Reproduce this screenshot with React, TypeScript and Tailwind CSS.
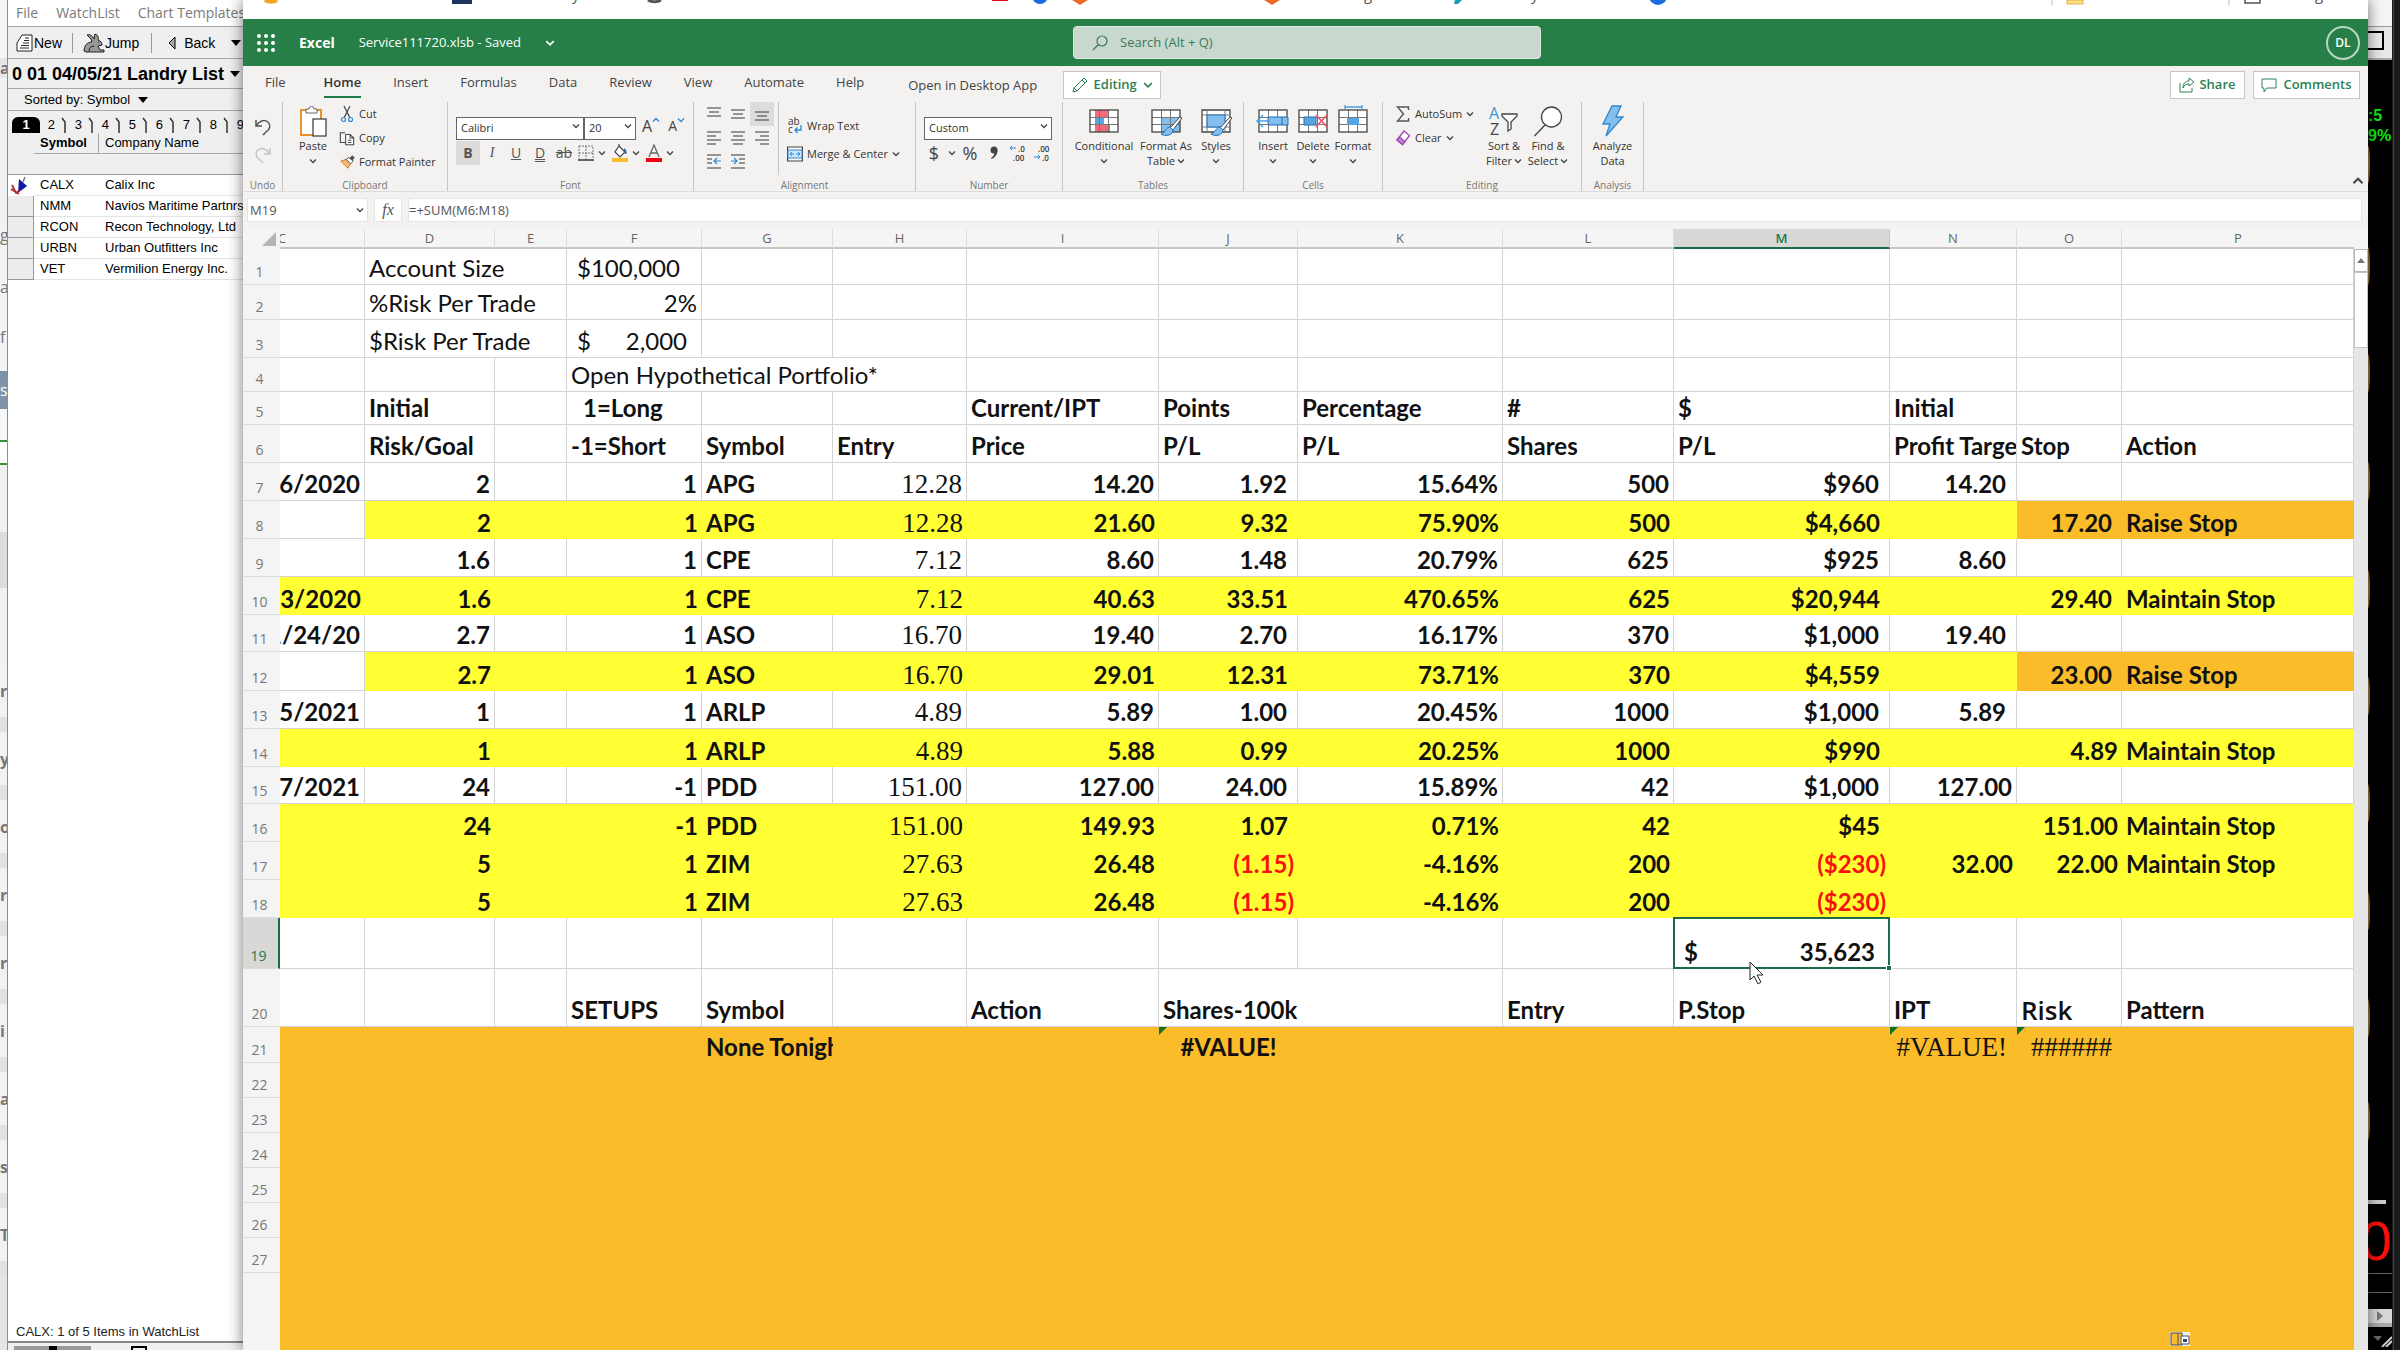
// App.tsx
// Desktop view: the watch list window on the left, the Excel workbook in front
// of it and the edge of the quotes board on the right.
import type { ReactNode } from 'react'

// ── Sheet data ────────────────────────────────────────
type CellValue = string | { v: string; cls: string }

interface SheetRow {
  n: number
  h: string
  fill?: string
  from?: string
  raise?: boolean
  cells?: Record<string, CellValue>
}

const COLS = [
  { id: 'C', w: 'w-[85px]' },
  { id: 'D', w: 'w-[130px]' },
  { id: 'E', w: 'w-[72px]' },
  { id: 'F', w: 'w-[135px]' },
  { id: 'G', w: 'w-[131px]' },
  { id: 'H', w: 'w-[134px]' },
  { id: 'I', w: 'w-[192px]' },
  { id: 'J', w: 'w-[139px]' },
  { id: 'K', w: 'w-[205px]' },
  { id: 'L', w: 'w-[171px]' },
  { id: 'M', w: 'w-[216px]' },
  { id: 'N', w: 'w-[127px]' },
  { id: 'O', w: 'w-[105px]' },
  { id: 'P', w: '' },
]

const YELLOW = 'bg-[#ffff33]'
const ORANGE = 'bg-[#fbbc2a]'

const left = (v: string) => ({ v, cls: 'justify-start pl-1' })
const tight = (v: string) => ({ v, cls: 'justify-end pr-1' })
const loss = (v: string) => ({ v, cls: 'justify-end pr-1 text-[#fb0f0c]' })
const light = (v: string) => ({ v, cls: 'justify-start pl-1 font-normal' })
const serif = (v: string) => ({ v, cls: "justify-end pr-2.5 font-normal text-[27px] font-['Liberation_Serif',serif]" })

// Default alignment for the number columns
const COL_CLS: Record<string, string> = {
  C: 'justify-end pr-1',
  D: 'justify-end pr-1',
  F: 'justify-end pr-1',
  G: 'justify-start pl-1',
  H: "justify-end pr-1 font-normal text-[27px] font-['Liberation_Serif',serif]",
  I: 'justify-end pr-1',
  J: 'justify-end pr-2.5',
  K: 'justify-end pr-1',
  L: 'justify-end pr-1',
  M: 'justify-end pr-2.5',
  N: 'justify-end pr-2.5',
  O: 'justify-end pr-2.5',
  P: 'justify-start pl-1',
}

const ROWS: SheetRow[] = [
  { n: 1, h: 'h-[36px]', cells: { D: light('Account Size'), F: { v: '$100,000', cls: 'justify-start pl-2.5 font-normal' } } },
  { n: 2, h: 'h-[35px]', cells: { D: light('%Risk Per Trade'), F: { v: '2%', cls: 'justify-end pr-1 font-normal' } } },
  { n: 3, h: 'h-[38px]', cells: { D: light('$Risk Per Trade'), F: { v: '$|2,000', cls: 'justify-between pl-2.5 pr-3.5 font-normal' } } },
  { n: 4, h: 'h-[34px]', cells: { F: light('Open Hypothetical Portfolio*') } },
  {
    n: 5, h: 'h-[33px]',
    cells: {
      D: left('Initial'), F: { v: '1=Long', cls: 'justify-start pl-4' }, I: left('Current/IPT'), J: left('Points'),
      K: left('Percentage'), L: left('#'), M: left('$'), N: left('Initial'),
    },
  },
  {
    n: 6, h: 'h-[38px]',
    cells: {
      D: left('Risk/Goal'), F: left('-1=Short'), G: left('Symbol'), H: left('Entry'),
      I: left('Price'), J: left('P/L'), K: left('P/L'), L: left('Shares'), M: left('P/L'),
      N: left('Profit Targe'), O: left('Stop'), P: left('Action'),
    },
  },
  { n: 7, h: 'h-[38px]', cells: { C: '16/2020', D: '2', F: '1', G: 'APG', H: '12.28', I: '14.20', J: '1.92', K: '15.64%', L: '500', M: '$960', N: '14.20' } },
  { n: 8, h: 'h-[38px]', fill: YELLOW, from: 'D', raise: true, cells: { D: '2', F: '1', G: 'APG', H: '12.28', I: '21.60', J: '9.32', K: '75.90%', L: '500', M: '$4,660', O: '17.20', P: 'Raise Stop' } },
  { n: 9, h: 'h-[38px]', cells: { D: '1.6', F: '1', G: 'CPE', H: '7.12', I: '8.60', J: '1.48', K: '20.79%', L: '625', M: '$925', N: '8.60' } },
  { n: 10, h: 'h-[38px]', fill: YELLOW, cells: { C: '13/2020', D: '1.6', F: '1', G: 'CPE', H: '7.12', I: '40.63', J: '33.51', K: '470.65%', L: '625', M: '$20,944', O: '29.40', P: 'Maintain Stop' } },
  { n: 11, h: 'h-[37px]', cells: { C: '1/24/20', D: '2.7', F: '1', G: 'ASO', H: '16.70', I: '19.40', J: '2.70', K: '16.17%', L: '370', M: '$1,000', N: '19.40' } },
  { n: 12, h: 'h-[39px]', fill: YELLOW, from: 'D', raise: true, cells: { D: '2.7', F: '1', G: 'ASO', H: '16.70', I: '29.01', J: '12.31', K: '73.71%', L: '370', M: '$4,559', O: '23.00', P: 'Raise Stop' } },
  { n: 13, h: 'h-[38px]', cells: { C: '/5/2021', D: '1', F: '1', G: 'ARLP', H: '4.89', I: '5.89', J: '1.00', K: '20.45%', L: '1000', M: '$1,000', N: '5.89' } },
  { n: 14, h: 'h-[38px]', fill: YELLOW, cells: { D: '1', F: '1', G: 'ARLP', H: '4.89', I: '5.88', J: '0.99', K: '20.25%', L: '1000', M: '$990', O: tight('4.89'), P: 'Maintain Stop' } },
  { n: 15, h: 'h-[37px]', cells: { C: '17/2021', D: '24', F: '-1', G: 'PDD', H: '151.00', I: '127.00', J: '24.00', K: '15.89%', L: '42', M: '$1,000', N: tight('127.00') } },
  { n: 16, h: 'h-[38px]', fill: YELLOW, cells: { D: '24', F: '-1', G: 'PDD', H: '151.00', I: '149.93', J: '1.07', K: '0.71%', L: '42', M: '$45', O: tight('151.00'), P: 'Maintain Stop' } },
  { n: 17, h: 'h-[38px]', fill: YELLOW, cells: { D: '5', F: '1', G: 'ZIM', H: '27.63', I: '26.48', J: loss('(1.15)'), K: '-4.16%', L: '200', M: loss('($230)'), N: tight('32.00'), O: tight('22.00'), P: 'Maintain Stop' } },
  { n: 18, h: 'h-[38px]', fill: YELLOW, cells: { D: '5', F: '1', G: 'ZIM', H: '27.63', I: '26.48', J: loss('(1.15)'), K: '-4.16%', L: '200', M: loss('($230)') } },
  { n: 19, h: 'h-[51px]', cells: { M: { v: '$|35,623', cls: 'justify-between pl-2.5 pr-3.5' } } },
  {
    n: 20, h: 'h-[58px]',
    cells: {
      F: left('SETUPS'), G: left('Symbol'), I: left('Action'), J: left('Shares-100k'), L: left('Entry'), M: left('P.Stop'),
      N: left('IPT'), O: { v: 'Risk', cls: "justify-start pl-1 font-semibold text-[26px] font-['Open_Sans',sans-serif]" }, P: left('Pattern'),
    },
  },
  { n: 21, h: 'h-[36px]', fill: ORANGE, cells: { G: left('None Tonight'), J: { v: '#VALUE!', cls: 'justify-center' }, N: serif('#VALUE!'), O: serif('######') } },
  { n: 22, h: 'h-[35px]', fill: ORANGE },
  { n: 23, h: 'h-[35px]', fill: ORANGE },
  { n: 24, h: 'h-[35px]', fill: ORANGE },
  { n: 25, h: 'h-[35px]', fill: ORANGE },
  { n: 26, h: 'h-[35px]', fill: ORANGE },
  { n: 27, h: 'h-[35px]', fill: ORANGE },
]

// Cells whose text runs over their right neighbour
const SPILL = ['D1', 'D2', 'D3', 'F4', 'G4', 'J20']
const ERRORS = ['J21', 'N21', 'O21']

// ── Icons ─────────────────────────────────────────────
function Chevron({ className = 'w-2 h-2 text-[#444]' }: { className?: string }) {
  return (
    <svg viewBox="0 0 8 8" className={`shrink-0 ${className}`} fill="none" stroke="currentColor" strokeWidth="1.3">
      <path d="M1 2.5l3 3 3-3" />
    </svg>
  )
}

function Lines({ rows, children }: { rows: number[][]; children?: ReactNode }) {
  return (
    <svg viewBox="0 0 16 16" className="w-4 h-4" stroke="#555" strokeWidth="1.2" fill="none">
      {rows.map(([y, a, b]) => <path key={y} d={`M${a} ${y}H${b}`} />)}
      {children}
    </svg>
  )
}

function GridIcon({ children, top }: { children?: ReactNode; top?: ReactNode }) {
  return (
    <svg viewBox="0 0 34 32" className="w-[34px] h-8" fill="none">
      <rect x="3" y="5" width="28" height="22" fill="#fff" />
      {top}
      <path d="M12.500 5v22M21.500 5v22M3 12.500h28M3 19.500h28" stroke="#777" strokeWidth="1" />
      <rect x="3" y="5" width="28" height="22" stroke="#444" strokeWidth="1.300" />
      {children}
    </svg>
  )
}

const BRUSH = (
  <g>
    <path d="M31 12L21 23l3 2 9-12z" fill="#fff" stroke="#444" />
    <path d="M21 22c-4 0-4 5-9 7 5 3 12 1 12-4z" fill="#83beec" stroke="#1e6fb8" />
  </g>
)

const ICONS = {
  paste: (
    <svg viewBox="0 0 28 32" className="w-7 h-8" fill="none">
      <rect x="2" y="5" width="20" height="25" fill="#fff" stroke="#e8912d" strokeWidth="2" />
      <path d="M7 8V4h3a2.500 2.500 0 015 0h3v4z" fill="#fff" stroke="#666" />
      <rect x="14" y="14" width="13" height="17" fill="#fff" stroke="#444" strokeWidth="1.300" />
    </svg>
  ),
  cut: (
    <svg viewBox="0 0 16 18" className="w-4 h-[18px]" fill="none" strokeWidth="1.200">
      <path d="M5 1l6 12M11 1L5 13" stroke="#444" />
      <circle cx="4.500" cy="14.500" r="2" stroke="#2b88d8" />
      <circle cx="11.500" cy="14.500" r="2" stroke="#2b88d8" />
    </svg>
  ),
  copy: (
    <svg viewBox="0 0 18 16" className="w-[18px] h-4" fill="none" stroke="#444" strokeWidth="1.200">
      <path d="M7 2H1.500v11H7" />
      <path d="M7.500 4h5l4 4v7.500h-9zM12.500 4v4h4M10 10.500h4M10 13h4" fill="#fff" />
    </svg>
  ),
  painter: (
    <svg viewBox="0 0 18 16" className="w-[18px] h-4" fill="none">
      <path d="M2 7l6-2 5 5-3 5z" fill="#f2b676" stroke="#d8761a" />
      <path d="M8 5l3-2 5 4-3 3z" fill="#fff" stroke="#444" />
      <path d="M12 4l3-3 2 2-2 3" fill="#555" stroke="#444" />
    </svg>
  ),
  conditional: (
    <GridIcon
      top={<g><path d="M8 5h13v7H8zM8 20h15v7H8z" fill="#f46a7d" /><path d="M8 12.500h9v7H8z" fill="#5aa5e0" /></g>}
    />
  ),
  formatTable: <GridIcon top={<path d="M12 12h19v15H12z" fill="#83beec" />}>{BRUSH}</GridIcon>,
  styles: (
    <svg viewBox="0 0 34 32" className="w-[34px] h-8" fill="none">
      <path d="M3 5h28v22H3z" fill="#fff" stroke="#444" strokeWidth="1.300" />
      <path d="M3 10h28M3 22h28M8 5v22M26 5v22" stroke="#777" />
      <path d="M8 10h18v12H8z" fill="#83beec" stroke="#1e6fb8" />
      {BRUSH}
    </svg>
  ),
  insert: (
    <GridIcon>
      <path d="M12 12h20v8H12z" fill="#83beec" stroke="#1e6fb8" />
      <path d="M26 12v8" stroke="#1e6fb8" />
      <path d="M14 16H1M7 10l-6 6 6 6" stroke="#4ba0e0" strokeWidth="1.500" />
    </GridIcon>
  ),
  remove: (
    <GridIcon>
      <path d="M8 12h12v8H8z" fill="#5aa5e0" stroke="#1e6fb8" />
      <path d="M20 10l11 12M31 10L20 22" stroke="#ee5868" strokeWidth="1.800" />
    </GridIcon>
  ),
  format: (
    <GridIcon>
      <path d="M9 0v4M26 0v4M9 2h17" stroke="#4ba0e0" strokeWidth="1.300" />
      <path d="M11 13h12v7H11z" fill="#5aa5e0" />
    </GridIcon>
  ),
  sort: (
    <svg viewBox="0 0 30 32" className="w-[30px] h-8" fill="none">
      <text x="0" y="14" fontSize="16" fill="#3b99d8" fontFamily="Open Sans">A</text>
      <text x="1" y="30" fontSize="16" fill="#444" fontFamily="Open Sans">Z</text>
      <path d="M13 9h15v2l-6 6v7l-3 2v-9l-6-6z" fill="#fff" stroke="#444" strokeWidth="1.300" />
    </svg>
  ),
  find: (
    <svg viewBox="0 0 30 32" className="w-[30px] h-8" fill="none" stroke="#444" strokeWidth="1.300">
      <circle cx="18.500" cy="12" r="10" fill="#fff" />
      <path d="M12 20L1.500 31" />
    </svg>
  ),
  analyze: (
    <svg viewBox="0 0 24 32" className="w-6 h-8">
      <path d="M11 1h9l-5 11h7L5 31l4-12H2z" fill="#83beec" stroke="#2f86cc" strokeWidth="1.300" />
    </svg>
  ),
  wrap: (
    <svg viewBox="0 0 16 18" className="w-4 h-[18px]" fill="none">
      <text x="1" y="8" fontSize="10" fill="#333" fontFamily="Open Sans">ab</text>
      <text x="1" y="16" fontSize="10" fill="#333" fontFamily="Open Sans">c</text>
      <path d="M14 8v5H8M10.500 10.500L8 13l2.500 3" stroke="#2b88d8" strokeWidth="1.300" />
    </svg>
  ),
  merge: (
    <svg viewBox="0 0 16 16" className="w-4 h-4" fill="none">
      <path d="M.6 1h14.800v14H.6z" fill="#fff" stroke="#444" strokeWidth="1.200" />
      <path d="M1 4h14v8H1z" fill="#cfe6f8" stroke="#2b88d8" />
      <path d="M3 8h4M9 8h4M5 6L3 8l2 2M11 6l2 2-2 2" stroke="#2b88d8" />
    </svg>
  ),
  sum: (
    <svg viewBox="0 0 14 16" className="w-3.5 h-4" fill="none" stroke="#555" strokeWidth="1.400">
      <path d="M12.500 4V1H1.500l6 7-6 7h11v-3" />
    </svg>
  ),
  clear: (
    <svg viewBox="0 0 16 16" className="w-4 h-4" fill="none" stroke="#a545b5" strokeWidth="1.300">
      <path d="M9 1l5.500 4.500-7 9L2 10z" fill="#fff" />
      <path d="M4.500 7l5.500 4.500-2.500 3L2 10z" fill="#c987d3" />
    </svg>
  ),
}

// ── Watch list window ─────────────────────────────────
const WATCHLIST = [
  ['CALX', 'Calix Inc'],
  ['NMM', 'Navios Maritime Partnrs'],
  ['RCON', 'Recon Technology, Ltd'],
  ['URBN', 'Urban Outfitters Inc'],
  ['VET', 'Vermilion Energy Inc.'],
]

function Triangle() {
  return <svg viewBox="0 0 10 6" className="w-2.5 h-1.5 shrink-0"><path d="M0 0h10L5 6z" fill="#000" /></svg>
}

function WatchListWindow() {
  return (
    <section className="w-[236px] shrink-0 flex flex-col overflow-hidden whitespace-nowrap bg-white border-l border-[#8a8d91] text-[13px] text-black font-['Liberation_Sans',sans-serif]">
      <nav className="h-[27px] shrink-0 flex items-center gap-[18px] pl-2 border-b border-[#a8a8a8] text-sm text-[#7a7a7a] font-['Open_Sans',sans-serif]">
        <button>File</button>
        <button>WatchList</button>
        <button>Chart Templates</button>
      </nav>
      <div className="h-8 shrink-0 flex items-center bg-[#efefef] border-b border-[#a8a8a8] pl-2 text-sm">
        <button className="flex items-center">
          <svg viewBox="0 0 18 18" className="w-[18px] h-[18px]" fill="#fff" stroke="#222">
            <path d="M6 1h10v16H1V9zM4 14h9M5 11.500h8M7 9h6M8 6.500h5M9 4h4" />
          </svg>
          New
        </button>
        <span className="w-px h-5 bg-[#999] mx-2.5" />
        <button className="flex items-center">
          <svg viewBox="0 0 22 20" className="w-[22px] h-5" fill="#999" stroke="#222">
            <path d="M1 18c0-5 3-9 8-9l-1-3L4 2c3-1 6 1 7 4l1-5c3 1 4 4 3 6 3 1 4 3 4 5l-4 1 2 4h4v2H3z" />
            <path d="M6 18c0-3 2-5 5-5M15 9h1" fill="none" />
          </svg>
          Jump
        </button>
        <span className="w-px h-5 bg-[#999] ml-3 mr-4" />
        <button className="flex items-center gap-2">
          <svg viewBox="0 0 8 14" className="w-2 h-3.5" fill="#aaa" stroke="#000"><path d="M7 1v12L1 7z" /></svg>
          Back
        </button>
        <span className="ml-4 flex"><Triangle /></span>
      </div>
      <h2 className="h-[30px] shrink-0 flex items-center gap-1.5 pl-1 bg-[#efefef] border-b border-[#a8a8a8] text-lg font-bold">
        0 01 04/05/21 Landry List <Triangle />
      </h2>
      <div className="h-[22px] shrink-0 flex items-center gap-2 pl-4 bg-[#efefef] border-b border-[#a8a8a8]">
        Sorted by: Symbol <Triangle />
      </div>
      <div className="h-[22px] shrink-0 flex items-end pl-1 bg-[#efefef]">
        <button className="w-7 h-4 shrink-0 rounded-t-md bg-black text-white font-bold leading-4">1</button>
        {['2', '3', '4', '5', '6', '7', '8', '9'].map((tab) => (
          <button key={tab} className="w-[27px] h-4 shrink-0 flex items-center justify-end gap-1.5 leading-4">
            {tab}
            <svg viewBox="0 0 6 16" className="w-1.5 h-4" fill="none" stroke="#333" strokeWidth="1.500"><path d="M1 1l3 4v11" /></svg>
          </button>
        ))}
      </div>
      <table className="w-full table-fixed border-separate border-spacing-0">
        <colgroup>
          <col className="w-[26px]" />
          <col className="w-[65px]" />
          <col />
        </colgroup>
        <thead>
          <tr className="h-[21px] bg-[#efefef] text-left">
            <th className="p-0" />
            <th className="p-0 pl-1.5 border-r border-b border-[#a8a8a8]">Symbol</th>
            <th className="p-0 pl-1.5 border-b border-[#a8a8a8] font-normal">Company Name</th>
          </tr>
          <tr className="h-[21px] bg-[#efefef]"><td colSpan={3} className="p-0 border-b border-[#999]" /></tr>
        </thead>
        <tbody>
          {WATCHLIST.map(([symbol, name], i) => (
            <tr key={symbol} className="h-[21px]">
              <td className={i === 0 ? 'p-0' : 'p-0 bg-[#ececec] border-r border-b border-[#999]'}>
                {i === 0 && (
                  <svg viewBox="0 0 22 20" className="w-[22px] h-5">
                    <path d="M11 3l8 7-9 7z" fill="#1018a8" />
                    <path d="M17 1l-2 5" stroke="#777" strokeWidth="1.500" />
                    <path d="M4 9l4 8 4-3M3 13l8 5" stroke="#b03030" strokeWidth="1.800" fill="none" />
                  </svg>
                )}
              </td>
              <td className="p-0 pl-1.5 border-b border-[#e4e4e4]">{symbol}</td>
              <td className="p-0 pl-1.5 border-b border-[#e4e4e4]">{name}</td>
            </tr>
          ))}
        </tbody>
      </table>
      <p className="mt-auto h-[18px] pl-2 leading-[18px] text-[#222]">CALX: 1 of 5 Items in WatchList</p>
      <div className="h-[9px] shrink-0 flex items-end gap-10 pl-1.5 border-t-2 border-[#888] bg-[#efefef]">
        <span className="w-[77px] h-1 bg-[#999] flex justify-center"><span className="w-2 h-1 bg-black" /></span>
        <span className="w-4 h-1 border-2 border-b-0 border-black" />
      </div>
    </section>
  )
}

// ── Ribbon ────────────────────────────────────────────
function Group({ label, className, children }: { label: string; className: string; children: ReactNode }) {
  return (
    <div className={`h-[89px] shrink-0 flex flex-col border-r border-[#c8c6c4] ${className}`}>
      <div className="flex flex-1">{children}</div>
      <p className="h-3 text-center text-[10px] leading-3 text-[#777]">{label}</p>
    </div>
  )
}

function BigButton({ icon, label, second, arrow, className }: { icon: ReactNode; label: string; second?: string; arrow?: boolean; className: string }) {
  return (
    <button className={`shrink-0 flex flex-col items-center pt-0.5 text-[11px] leading-[15px] text-[#333] ${className}`}>
      <span className="h-[34px] flex items-center">{icon}</span>
      <span>{label}</span>
      <span className="h-[15px] flex items-center gap-0.5">{second}{arrow && <Chevron />}</span>
    </button>
  )
}

function SmallButton({ icon, label, arrow }: { icon: ReactNode; label: string; arrow?: boolean }) {
  return (
    <button className="h-6 flex items-center gap-1 text-[11px] text-[#333]">
      <span className="w-4 flex justify-center">{icon}</span>
      {label}
      {arrow && <Chevron />}
    </button>
  )
}

function Picker({ label, value, className }: { label: string; value: string; className: string }) {
  return (
    <div className={`relative h-[23px] ${className}`}>
      <select aria-label={label} defaultValue={value} className="w-full h-full appearance-none border border-[#666] bg-white pl-1 text-[11px] text-[#333]">
        <option>{value}</option>
      </select>
      <Chevron className="absolute right-1 top-2 w-2 h-2 text-[#444] pointer-events-none" />
    </div>
  )
}

const TABS = ['Home', 'Insert', 'Formulas', 'Data', 'Review', 'View', 'Automate', 'Help']

function TabRow() {
  return (
    <div className="h-[34px] flex items-start text-[13px] text-[#444]">
      <nav className="flex items-start gap-8 pl-[22px] pt-1.5">
        <button className="mr-1.5 h-5 leading-5">File</button>
        {TABS.map((tab) => (
          <button
            key={tab}
            className={tab === 'Home' ? 'h-[26px] leading-5 pb-1 border-b-2 border-[#1e7a45] font-semibold text-[#333]' : 'h-5 leading-5'}
          >
            {tab}
          </button>
        ))}
      </nav>
      <button className="ml-11 h-[38px] leading-[38px]">Open in Desktop App</button>
      <button className="ml-[26px] mt-[5px] w-[98px] h-7 flex items-center justify-center gap-1.5 border border-[#c8c6c4] bg-white font-semibold text-[#2c8152]">
        <svg viewBox="0 0 16 16" className="w-4 h-4" fill="none" stroke="currentColor"><path d="M1 15l1-4L12 1l3 3L5 14zM10 3l3 3M2 11l3 3" /></svg>
        Editing
        <Chevron className="w-2.5 h-2.5" />
      </button>
      <div className="ml-auto mt-[5px] pr-2 flex gap-2 text-[#2c8152] font-semibold">
        <button className="w-[75px] h-7 flex items-center justify-center gap-1 border border-[#c8c6c4] bg-white">
          <svg viewBox="0 0 16 16" className="w-4 h-4" fill="none" stroke="currentColor">
            <path d="M1 6v9h12v-4" />
            <path d="M10 1l5 4-5 4V7C7 7 5 8 4 11c0-4 2-7 6-7z" />
          </svg>
          Share
        </button>
        <button className="w-[107px] h-7 flex items-center justify-center gap-1.5 border border-[#c8c6c4] bg-white">
          <svg viewBox="0 0 16 16" className="w-4 h-4" fill="none" stroke="currentColor"><path d="M1 2h14v9H6l-3 4v-4H1z" /></svg>
          Comments
        </button>
      </div>
    </div>
  )
}

function Ribbon() {
  const glyph = 'w-6 h-6 text-sm text-[#555]'
  return (
    <div className="relative h-[92px] flex pt-0.5 border-b border-[#dcdcdc]">
      <Group label="Undo" className="w-10">
        <div className="flex flex-col items-center gap-2.5 w-full pt-4">
          <button aria-label="Undo">
            <svg viewBox="0 0 16 18" className="w-4 h-[18px]" fill="none" stroke="#555" strokeWidth="1.500"><path d="M1 2v6h6M1 8c3-5 8-7 12-4 3 3 2 7-1 9l-4 4" /></svg>
          </button>
          <button aria-label="Redo">
            <svg viewBox="0 0 16 18" className="w-4 h-[18px]" fill="none" stroke="#c4c4c4" strokeWidth="1.500"><path d="M15 2v6H9M15 8c-3-5-8-7-12-4-3 3-2 7 1 9l4 4" /></svg>
          </button>
        </div>
      </Group>
      <Group label="Clipboard" className="w-[165px]">
        <BigButton icon={ICONS.paste} label="Paste" arrow className="w-11 ml-2" />
        <div className="flex flex-col ml-1">
          <SmallButton icon={ICONS.cut} label="Cut" />
          <SmallButton icon={ICONS.copy} label="Copy" />
          <SmallButton icon={ICONS.painter} label="Format Painter" />
        </div>
      </Group>
      <Group label="Font" className="w-[246px]">
        <div className="flex flex-col gap-1 pt-3 pl-2">
          <div className="flex items-center">
            <Picker label="Font name" value="Calibri" className="w-32" />
            <Picker label="Font size" value="20" className="w-[52px]" />
            <button className="ml-1.5 flex items-start text-base leading-5 text-[#444]">
              A<Chevron className="w-2 h-2 rotate-180 text-[#2b88d8]" />
            </button>
            <button className="ml-2 flex items-start text-sm leading-5 text-[#444]">
              A<Chevron className="w-2 h-2 text-[#2b88d8]" />
            </button>
          </div>
          <div className="flex items-center">
            <button className={`${glyph} bg-[#dedcda] font-bold`}>B</button>
            <button className={`${glyph} italic font-['Liberation_Serif',serif]`}>I</button>
            <button className={`${glyph} underline`}>U</button>
            <button className={`${glyph} underline decoration-double`}>D</button>
            <button className={`${glyph} line-through`}>ab</button>
            <button aria-label="Borders" className="w-[34px] h-6 pl-0.5 flex items-center gap-1">
              <svg viewBox="0 0 16 16" className="w-4 h-4" fill="none" stroke="#777"><path d="M1 1h14v13M1 1v13M8 1v13M1 8h14" strokeDasharray="2 1" /><path d="M0 15h16" stroke="#333" strokeWidth="1.500" /></svg>
              <Chevron />
            </button>
            <button aria-label="Fill color" className="w-[34px] h-6 pl-0.5 flex items-center gap-1">
              <svg viewBox="0 0 16 18" className="w-4 h-[18px]" fill="none"><path d="M7 2l6 6-5 5-5-5zM7 2V0" fill="#fff" stroke="#444" strokeWidth="1.200" /><path d="M12 5c2 1 2 3 2 5" stroke="#2b6fc0" strokeWidth="1.500" /><path d="M0 14h16v4H0z" fill="#fbbc2a" /></svg>
              <Chevron />
            </button>
            <button aria-label="Font color" className="w-[34px] h-6 pl-0.5 flex items-center gap-1">
              <svg viewBox="0 0 16 18" className="w-4 h-[18px]" fill="none"><path d="M3 13L8 1l5 12M5 9h6" stroke="#666" strokeWidth="1.300" /><path d="M0 14h16v4H0z" fill="#f00010" /></svg>
              <Chevron />
            </button>
          </div>
        </div>
      </Group>
      <Group label="Alignment" className="w-[222px]">
        <div className="grid grid-cols-3 auto-rows-[24px] place-items-center w-[72px] ml-2">
          <button aria-label="Top align"><Lines rows={[[2, 1, 15], [6, 3, 13], [10, 1, 15]]} /></button>
          <button aria-label="Middle align"><Lines rows={[[4, 1, 15], [8, 3, 13], [12, 1, 15]]} /></button>
          <button aria-label="Bottom align" className="w-6 h-6 flex items-center justify-center bg-[#dedcda]"><Lines rows={[[6, 1, 15], [10, 3, 13], [14, 1, 15]]} /></button>
          <button aria-label="Align left"><Lines rows={[[2, 1, 15], [6, 1, 10], [10, 1, 15], [14, 1, 10]]} /></button>
          <button aria-label="Center"><Lines rows={[[2, 1, 15], [6, 3, 13], [10, 1, 15], [14, 3, 13]]} /></button>
          <button aria-label="Align right"><Lines rows={[[2, 1, 15], [6, 6, 15], [10, 1, 15], [14, 6, 15]]} /></button>
          <button aria-label="Decrease indent"><Lines rows={[[1, 1, 15], [5, 1, 6], [9, 1, 6], [14, 1, 15]]}><path d="M15 7H8M11 4L8 7l3 3" stroke="#2b88d8" /></Lines></button>
          <button aria-label="Increase indent"><Lines rows={[[1, 1, 15], [5, 9, 15], [9, 9, 15], [14, 1, 15]]}><path d="M1 7h6M4 4l3 3-3 3" stroke="#2b88d8" /></Lines></button>
        </div>
        <span className="w-px h-[73px] ml-1 bg-[#c8c6c4]" />
        <div className="flex flex-col gap-1 pt-3 pl-2">
          <SmallButton icon={ICONS.wrap} label="Wrap Text" />
          <SmallButton icon={ICONS.merge} label="Merge & Center" arrow />
        </div>
      </Group>
      <Group label="Number" className="w-[147px]">
        <div className="flex flex-col gap-1 pt-3 pl-2">
          <Picker label="Number format" value="Custom" className="w-32" />
          <div className="flex items-center text-lg leading-6 text-[#444]">
            <button className="w-5">$</button>
            <span className="w-4 flex justify-center"><Chevron /></span>
            <button className="w-5">%</button>
            <button aria-label="Comma style" className="w-7 flex justify-center">
              <svg viewBox="0 0 8 14" className="w-2 h-3.5"><circle cx="4" cy="4" r="3.500" fill="#444" /><path d="M7.500 4c0 5-3 8-6 9l-.5-1c2-1 3.500-3 3.500-6z" fill="#444" /></svg>
            </button>
            {['.0', '.00'].map((top, i) => (
              <button key={top} aria-label={i === 0 ? 'Increase decimal' : 'Decrease decimal'} className={`flex justify-center ${i === 0 ? 'w-5' : 'w-7'}`}>
                <svg viewBox="0 0 18 18" className="w-[18px] h-[18px]" fontSize="8" fontFamily="Open Sans" fontWeight="600" fill="#333">
                  <text x={i === 0 ? 9 : 5} y="8">{top}</text>
                  <text x={i === 0 ? 4 : 9} y="17">{i === 0 ? '.00' : '.0'}</text>
                  <path d={i === 0 ? 'M7 4H1M3 2L1 4l2 2' : 'M1 13h6M5 11l2 2-2 2'} stroke="#2b88d8" fill="none" />
                </svg>
              </button>
            ))}
          </div>
        </div>
      </Group>
      <Group label="Tables" className="w-[181px]">
        <BigButton icon={ICONS.conditional} label="Conditional" arrow className="w-16 ml-[9px]" />
        <BigButton icon={ICONS.formatTable} label="Format As" second="Table" arrow className="w-15" />
        <BigButton icon={ICONS.styles} label="Styles" arrow className="w-10" />
      </Group>
      <Group label="Cells" className="w-[139px]">
        <BigButton icon={ICONS.insert} label="Insert" arrow className="w-10 ml-[9px]" />
        <BigButton icon={ICONS.remove} label="Delete" arrow className="w-10" />
        <BigButton icon={ICONS.format} label="Format" arrow className="w-10" />
      </Group>
      <Group label="Editing" className="w-[199px]">
        <div className="w-[87px] flex flex-col ml-3">
          <SmallButton icon={ICONS.sum} label="AutoSum" arrow />
          <SmallButton icon={ICONS.clear} label="Clear" arrow />
        </div>
        <BigButton icon={ICONS.sort} label="Sort &" second="Filter" arrow className="w-11" />
        <BigButton icon={ICONS.find} label="Find &" second="Select" arrow className="w-11" />
      </Group>
      <Group label="Analysis" className="w-[62px]">
        <BigButton icon={ICONS.analyze} label="Analyze" second="Data" className="w-full" />
      </Group>
      <button aria-label="Collapse ribbon" className="ml-auto self-end mr-1 mb-1">
        <Chevron className="w-3 h-3 rotate-180 text-[#444]" />
      </button>
    </div>
  )
}

// ── Sheet ─────────────────────────────────────────────
function Cell({ row, col }: { row: SheetRow; col: string }) {
  const key = `${col}${row.n}`
  const raw = row.cells?.[col]
  const text = typeof raw === 'object' ? raw.v : raw
  const cls = typeof raw === 'object' ? raw.cls : COL_CLS[col]
  const spill = SPILL.includes(key)

  let fill = row.fill && !(row.from && col < row.from) ? row.fill : ''
  if (row.raise && col >= 'O') fill = ORANGE
  const line = fill || `bg-white border-b border-[#d4d4d4] ${spill ? '' : 'border-r'}`

  // Spilled text has to be painted above the cells that follow it
  const layer = key === 'M19' || (spill && text) ? 'relative z-10' : ERRORS.includes(key) ? 'relative' : ''

  return (
    <td className={`p-0 align-bottom ${line} ${layer}`}>
      {text && (
        <div className={`flex pb-0.5 ${spill ? '' : 'overflow-hidden'} ${cls}`}>
          {text.split('|').map((part) => <span key={part} className="shrink-0">{part}</span>)}
        </div>
      )}
      {ERRORS.includes(key) && (
        <svg viewBox="0 0 8 8" className="absolute left-0 top-0 w-2 h-2"><path d="M0 0h8L0 8z" fill="#13701f" /></svg>
      )}
      {key === 'M19' && (
        <span className="absolute -inset-px border-2 border-[#1f6b45]">
          <span className="absolute -right-1 -bottom-1 w-1.5 h-1.5 border border-white bg-[#1f6b45]" />
          <svg viewBox="0 0 16 24" className="absolute left-[74px] top-[42px] w-4 h-6 z-10">
            <path d="M1 1v18l4-4 4 8 3-2-4-7h6z" fill="#fff" stroke="#222" />
          </svg>
        </span>
      )}
    </td>
  )
}

function Sheet() {
  return (
    <div className="flex-1 flex min-h-0">
      <div className="flex-1 min-w-0 flex flex-col">
        <table className="w-full table-fixed border-separate border-spacing-0 whitespace-nowrap text-2xl leading-7 font-bold text-[#111] font-['Lato',sans-serif]">
          <colgroup>
            <col className="w-[37px]" />
            {COLS.map((c) => <col key={c.id} className={c.w} />)}
          </colgroup>
          <thead>
            <tr className="h-5 text-[13px] leading-[18px] text-[#666] font-['Open_Sans',sans-serif]">
              <th className="p-0 bg-[#f4f4f4]">
                <svg viewBox="0 0 14 14" className="w-3.5 h-3.5 ml-auto mr-1"><path d="M14 0v14H0z" fill="#b5b5b5" /></svg>
              </th>
              {COLS.map((c) => (
                <th
                  key={c.id}
                  className={c.id === 'M'
                    ? 'p-0 border-r border-b-2 border-[#1f6b45] border-r-[#c8c8c8] bg-[#d8d8d6] font-semibold text-[#1e7a45]'
                    : 'p-0 border-r border-b-2 border-r-[#dcdcdc] border-b-[#c6c6c6] bg-[#f5f5f5] font-normal last:border-r-0'}
                >
                  {c.id === 'C' ? <div className="w-1.5 overflow-hidden flex justify-end">C</div> : c.id}
                </th>
              ))}
            </tr>
          </thead>
          <tbody>
            {ROWS.map((row) => (
              <tr key={row.n} className={row.h}>
                <th className={`p-0 pr-1 align-bottom border-b border-[#dcdcdc] text-sm leading-6 font-normal font-['Open_Sans',sans-serif] ${row.n === 19 ? 'bg-[#d8d8d6] text-[#1e7a45] border-r-2 border-r-[#1f6b45]' : 'bg-[#f4f4f4] text-[#777]'}`}>
                  {row.n}
                </th>
                {COLS.map((c) => <Cell key={c.id} row={row} col={c.id} />)}
              </tr>
            ))}
          </tbody>
        </table>
        <div className="flex-1 flex">
          <div className="w-[37px] bg-[#f4f4f4]" />
          <div className={`flex-1 flex items-end justify-end pr-[164px] pb-1 ${ORANGE}`}>
            <svg viewBox="0 0 20 14" className="w-5 h-3.5" fill="none">
              <path d="M0 0h20v14H0z" fill="#eee" />
              <path d="M1 1h11v12H1zM8 1v12" stroke="#444a66" fill="#fbbc2a" />
              <path d="M11 4h8v8h-8z" stroke="#444a66" fill="#fff" />
              <path d="M13 7h4v3h-4z" fill="#3c4370" />
            </svg>
          </div>
        </div>
      </div>
      {/* Vertical scroll bar */}
      <div className="w-3.5 shrink-0 flex flex-col bg-[#e6e6e6]">
        <div className="h-5 bg-[#f5f5f5]" />
        <button aria-label="Scroll up" className="h-[23px] border border-[#b8b8b8] bg-white flex items-center justify-center">
          <svg viewBox="0 0 8 5" className="w-2 h-[5px]"><path d="M0 5h8L4 0z" fill="#777" /></svg>
        </button>
        <div className="h-[76px] border border-[#c4c4c4] bg-white" />
      </div>
    </div>
  )
}

// ── Excel window ──────────────────────────────────────
function BookmarksEdge() {
  return (
    <svg className="w-full h-[19px] shrink-0 bg-white" fill="none" fontFamily="Open Sans" fontSize="15">
      <path d="M22 0a8 5 0 0012 0" stroke="#f5a623" strokeWidth="4" />
      <path d="M209 0h20v4h-20z" fill="#1d3461" />
      <path d="M405 0a8 4 0 0013 0" stroke="#555" strokeWidth="3" />
      <path d="M749 0h16v1h-16z" fill="#e00b1c" />
      <circle cx="797" cy="-4" r="8" fill="#1b6de0" />
      <path d="M829 0h16l-8 5zM1021 0h16l-8 5z" fill="#ee6a2a" />
      <path d="M1212 0h7l-4 4h-4z" fill="#1899b5" />
      <circle cx="1415" cy="-4" r="9" fill="#1b6de0" />
      <path d="M1809 0v5M1986 0v5" stroke="#bbb" />
      <path d="M1824 0h16v4h-16z" fill="#ffe08a" stroke="#e0b040" />
      <path d="M2002 0v3h15V0" stroke="#555" strokeWidth="1.500" />
      <text x="329" y="0" fill="#555">y</text>
      <text x="1121" y="0" fill="#555">g</text>
      <text x="1288" y="0" fill="#555">y</text>
      <text x="2072" y="0" fill="#555">g</text>
    </svg>
  )
}

function ExcelWindow() {
  return (
    <main className="relative flex-1 min-w-0 flex flex-col bg-[#f3f2f1] whitespace-nowrap shadow-[0_0_14px_rgba(0,0,0,0.55)] font-['Open_Sans',sans-serif]">
      <BookmarksEdge />
      <header className="h-[47px] shrink-0 flex items-center bg-[#257f46] text-white text-[13px]">
        <button aria-label="App launcher" className="ml-3.5 grid grid-cols-3 gap-[3px]">
          {[0, 1, 2, 3, 4, 5, 6, 7, 8].map((i) => <span key={i} className="w-1 h-1 rounded-full bg-white" />)}
        </button>
        <h1 className="ml-6 text-sm font-bold">Excel</h1>
        <button className="ml-6 flex items-center gap-6">
          Service111720.xlsb - Saved
          <Chevron className="w-2.5 h-2.5" />
        </button>
        <label className="ml-[518px] w-[468px] h-[33px] flex items-center gap-3 pl-[18px] rounded-sm border border-[#dfe9e2] bg-[#c8d8ce]">
          <svg viewBox="0 0 16 16" className="w-4 h-4" fill="none" stroke="#3b7a58" strokeWidth="1.200"><circle cx="10" cy="6" r="5" /><path d="M6.500 9.500L1 15" /></svg>
          <input aria-label="Search" placeholder="Search (Alt + Q)" className="flex-1 bg-transparent outline-none placeholder:text-[#3b7a58]" />
        </label>
        <button className="ml-auto mr-2 w-[34px] h-[34px] rounded-full border-2 border-[#b9d6c4] text-xs font-semibold">DL</button>
      </header>
      <TabRow />
      <Ribbon />
      <div className="h-[37px] shrink-0 flex items-start gap-1.5 pt-1.5 pl-1 pr-1.5 text-[13px] text-[#555]">
        <label className="relative w-[121px] h-6">
          <input aria-label="Name box" defaultValue="M19" className="w-full h-full pl-0.5 border border-[#e4e4e4] bg-white" />
          <Chevron className="absolute right-1 top-2 w-2 h-2 text-[#444]" />
        </label>
        <button className="w-7 h-6 border border-[#e4e4e4] bg-white text-base leading-5 italic font-['Liberation_Serif',serif]">fx</button>
        <input aria-label="Formula bar" defaultValue="=+SUM(M6:M18)" className="flex-1 h-6 border border-[#e4e4e4] bg-white" />
      </div>
      <Sheet />
    </main>
  )
}

// ── Window edges on both sides ────────────────────────
const PAGE_EDGE = [
  { h: 'h-[58px]', cls: 'bg-[#f4f5f6]', text: '' },
  { h: 'h-[20px]', cls: 'bg-[#e4e6e9] font-bold', text: 'ai' },
  { h: 'h-[145px]', cls: 'bg-[#eff1f3]', text: '' },
  { h: 'h-[24px]', cls: 'bg-[#f2f3f5]', text: 'g' },
  { h: 'h-[28px]', cls: 'bg-[#f2f3f5]', text: '' },
  { h: 'h-[24px]', cls: 'bg-[#f2f3f5]', text: 'a' },
  { h: 'h-[26px]', cls: 'bg-[#f2f3f5]', text: '' },
  { h: 'h-[24px]', cls: 'bg-[#f2f3f5]', text: 'f' },
  { h: 'h-[22px]', cls: 'bg-[#f2f3f5]', text: '' },
  { h: 'h-[38px]', cls: 'bg-[#7d93a8] text-white', text: 's' },
  { h: 'h-[31px]', cls: 'bg-[#f6f7f8]', text: '' },
  { h: 'h-[25px]', cls: 'bg-white border-y-2 border-[#35913a]', text: '' },
  { h: 'h-[67px]', cls: 'bg-[#f1f0f3]', text: '' },
  { h: 'h-[56px]', cls: 'bg-[#dddce0]', text: '' },
  { h: 'h-[76px]', cls: 'bg-[#f1f0f3]', text: '' },
]

function PageEdge() {
  return (
    <div className="w-[7px] shrink-0 flex flex-col overflow-hidden bg-[#e3e5e8] text-base text-[#777] font-['Open_Sans',sans-serif]">
      {PAGE_EDGE.map((part, i) => (
        <div key={i} className={`shrink-0 flex items-center justify-start leading-5 overflow-hidden ${part.h} ${part.cls}`}>{part.text}</div>
      ))}
      {['r', 'y', 'o', 'r', 'r', 'i', 'a', 's', 'T'].map((ch, i) => (
        <div key={i} className="h-[68px] shrink-0 flex items-center bg-[#f1f2f4] border-b-[15px] border-[#dfe2e5] font-bold">{ch}</div>
      ))}
    </div>
  )
}

function QuotesEdge() {
  return (
    <aside className="w-8 shrink-0 flex overflow-hidden bg-[#1b1b1b] font-['Liberation_Sans',sans-serif]">
      <div className="w-6 flex flex-col bg-black overflow-hidden">
        <div className="h-[27px] shrink-0 bg-[#f6f6f6] border-b border-[#999]" />
        <div className="h-[33px] shrink-0 bg-[#e9e9e9] border-b-2 border-[#aaa] pt-1">
          <div className="w-4 h-[19px] border-2 border-l-0 border-black bg-[#eee]" />
        </div>
        <div className="mt-[46px] shrink-0 flex flex-col items-start text-base leading-5 font-bold text-[#12e812]">
          <span>:5</span>
          <span>9%</span>
        </div>
        <svg viewBox="0 0 6 1054" className="w-1.5 h-[1054px] shrink-0" fill="#a37a45">
          {[18, 120, 227, 335, 443, 550, 657, 765, 872, 975].map((y) => <ellipse key={y} cx="0" cy={y} rx="2" ry="19" />)}
        </svg>
        <div className="w-[18px] h-1 shrink-0 bg-[#ccc]" />
        <div className="h-[70px] shrink-0 flex justify-end border-b border-[#666] text-[56px] leading-[74px] text-[#fb0f0c]">0</div>
        <div className="h-[19px] shrink-0 border-b border-[#666]" />
        <div className="h-[18px] shrink-0 mt-4 bg-[#d8d8d8] border-b-4 border-[#aaa] flex items-center justify-center">
          <svg viewBox="0 0 6 10" className="w-1.5 h-2.5"><path d="M0 0l6 5-6 5z" fill="#777" /></svg>
        </div>
        <svg viewBox="0 0 24 20" className="w-6 h-5 shrink-0"><path d="M5 9h9l-4 5z" fill="#666" /><path d="M14 20L24 10M18 20l6-6" stroke="#ccc" strokeWidth="2" /></svg>
      </div>
      <span className="w-px ml-px bg-[#444]" />
    </aside>
  )
}

export default function App() {
  return (
    <div className="h-screen flex overflow-hidden bg-[#e3e5e8]">
      <PageEdge />
      <WatchListWindow />
      <ExcelWindow />
      <QuotesEdge />
    </div>
  )
}
